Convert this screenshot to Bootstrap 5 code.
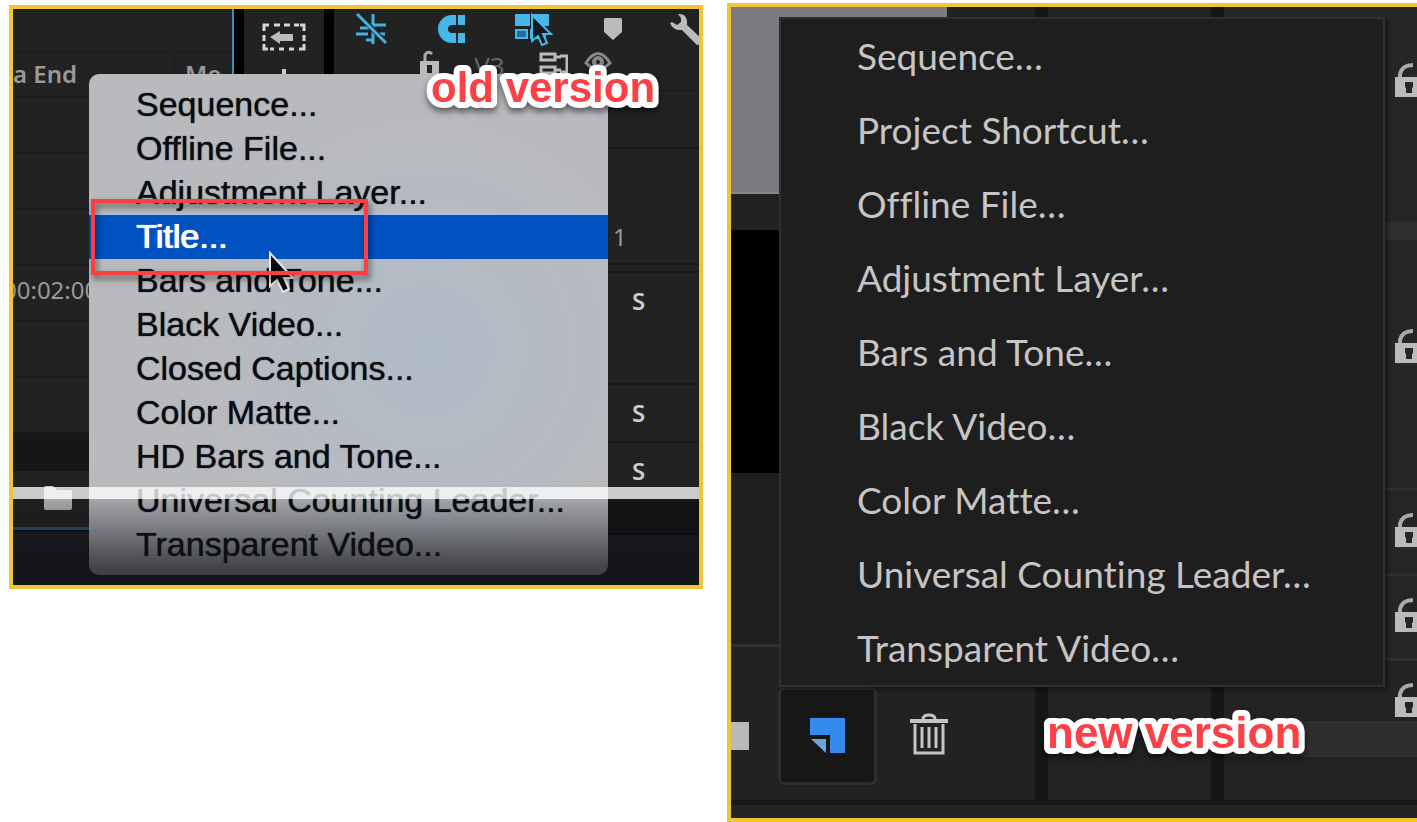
<!DOCTYPE html>
<html lang="en">
<head>
<meta charset="utf-8">
<meta name="viewport" content="width=device-width, initial-scale=1">
<title>New Item menu: old and new version</title>
<link href="https://cdn.jsdelivr.net/npm/bootstrap@5.3.0/dist/css/bootstrap.min.css" rel="stylesheet">
<style>
  body { background: #fff; font-family: "Liberation Sans", Arial, sans-serif; }
  .compare { display: grid; grid-template-columns: 694fr 690fr; column-gap: 24px; padding-left: 9px; }
  .shot { border: 4px solid #f2c437; background: #222; }
  .shot-old { margin-top: 5px; }
  .shot-new { margin-top: 3px; border-right: 0; }
  svg { display: block; flex: none; }

  /* old version: application behind the menu */
  .old-project { width: 221px; flex: none; border-right: 2px solid #3f8fbd; color: #999; font: 24px/40px "Noto Sans", sans-serif; overflow: hidden; }
  .old-project .line-row { height: 56px; border-bottom: 1px solid #1b1b1b; }
  .old-project .top-row { height: 44px; }
  .old-project .head-row { height: 44px; font-weight: 600; padding-top: 1px; }
  .old-project .me-col { border-left: 1px solid #181818; margin-right: 8px; padding-left: 10px; width: 50px; overflow: hidden; }
  .old-project .code-row { padding-top: 5px; text-indent: -10px; }
  .old-project .dim-row { height: 38px; background: #161616; }
  .old-project .foot-row { height: 53px; padding-left: 31px; }
  .gutter { width: 10px; flex: none; background: #000; }
  .old-tools { width: 80px; flex: none; padding-top: 14px; }
  .old-time { color: #ccc; }
  .tool-row { height: 39px; padding-left: 22px; }
  .track-row { height: 43px; padding: 2px 0 0 86px; border-bottom: 1px solid #181818; color: #666; font: 26px/32px "Noto Sans", sans-serif; }
  .track-row .track-name { width: 99px; text-align: center; }
  .time-row { border-bottom: 2px solid #191919; padding-left: 298px; font: 600 24px/28px "Noto Sans", sans-serif; }
  .time-row.h58 { height: 58px; padding-top: 14px; }
  .time-row.h116 { height: 116px; padding: 0 0 12px 279px; font-weight: 400; color: #999; }
  .time-row.h8 { height: 8px; }
  .time-row.h112 { height: 112px; padding-top: 14px; }
  .old-end { height: 34px; background: #131313; border-bottom: 2px solid #090909; }
  .old-base { height: 55px; background: #1c1d20; border-top: 2px solid #0a0c0e; }
  .blue-line { height: 3px; width: 221px; background: #285f84; }
  .old-body { height: 518px; }

  .old-menu { left: 76px; top: 65px; width: 519px; padding: 9px 0 8px; border-radius: 10px; background: radial-gradient(circle at 65% 55%, #b0bcc8 0, #b5bbc3 25%, #b9babd 55%); overflow: hidden; }
  .old-menu .pick { display: block; width: 100%; height: 44px; padding: 0 0 2px 47px; border: 0; background: none; color: #0b0c12; font-size: 34px; line-height: 42px; text-align: left; text-shadow: 0 0 1px #0b0c12; white-space: nowrap; }
  .old-menu .pick.on { background: #0052c1; color: #fff; text-shadow: 0 0 1px #fff, 1px 0 0 #fff; box-shadow: 0 -1px 0 #a3c3ee, 0 1px 0 #a3c3ee; }
  .seek-bar { left: 0; right: 0; top: 478px; height: 12px; background: rgba(255,255,255,.77); }
  .fade-out { left: 0; right: 0; bottom: 0; height: 86px; background: linear-gradient(rgba(15,17,22,.12), rgba(15,17,22,.7) 80%, rgba(15,17,22,.74)); }
  .pointer { left: 255px; top: 242px; }
  .mark-box { left: 78px; top: 190px; width: 277px; height: 76px; border: 4px solid #f94144; filter: drop-shadow(2px 4px 3px rgba(0,0,0,.55)); }
  .tag-text { overflow: visible; filter: drop-shadow(0 4px 3px rgba(0,0,0,.5)); }
  .tag-text text { fill: #fb4145; font-weight: 700; stroke: #fff; stroke-width: 12px; stroke-linejoin: round; paint-order: stroke; }
  .tag-old { right: 40px; top: 54px; font-size: 42px; }
  .tag-new { right: 114px; bottom: 61px; font-size: 44px; }

  /* new version */
  .new-left { width: 304px; flex: none; }
  .new-left .preview { height: 187px; width: 216px; background: #7d7b7f; border-bottom: 2px solid #88868a; }
  .new-left .gap-row { height: 36px; }
  .new-left .black-row { height: 243px; background: #000; }
  .new-left .list-row { height: 174px; background: #1f1f1f; border-bottom: 3px solid #2e2e2e; }
  .new-left .action-row { height: 153px; padding-top: 24px; }
  .side-chip { width: 18px; height: 28px; background: #b9b9b9; }
  .new-btn { width: 99px; height: 98px; margin-left: 29px; background: #171717; border: 3px solid #2e2e2e; border-radius: 6px; }
  .bin-btn { margin-left: 33px; background: none; border: 0; }
  .split { width: 13px; flex: none; background: #161616; }
  .new-mid { width: 163px; flex: none; background: #232323; }
  .new-tracks { background: #262527; }
  .new-tracks .lane { border-bottom: 3px solid #2f2f30; padding-left: 171px; overflow: hidden; }
  .lane-a { height: 218px; padding-top: 56px; }
  .lane-sep { height: 15px; background: #303030; }
  .lane-b { height: 251px; padding-top: 89px; }
  .lane-c { height: 85px; padding-top: 22px; }
  .lane-d { height: 60px; padding-top: 22px; background: #232323; }
  .lane-bar { height: 36px; background: #2e2e2e; }
  .lane-e { height: 43px; background: #232323; }
  .new-base { height: 18px; border-top: 5px solid #191919; background: #242424; }
  .new-menu { left: 48px; top: 10px; width: 606px; background: #1e1e1e; border: 2px solid #303030; box-shadow: 3px 3px 4px rgba(0,0,0,.4); }
  .new-menu .pick { display: block; width: 100%; height: 74px; padding: 0 0 0 76px; border: 0; background: none; color: #c6c4c4; font: 37px/70px Lato, sans-serif; font-variant-ligatures: none; text-align: left; white-space: nowrap; }
</style>
</head>
<body>
<svg class="d-none" aria-hidden="true">
  <symbol id="padlock" viewBox="0 0 28 35">
    <path d="M5 16V11Q7 2 18 2" fill="none" stroke="#aaa" stroke-width="4"/>
    <path fill="#bbb" fill-rule="evenodd" d="M0 14H28V34H0ZM10 19V24L11 25V30H17V25L18 24V19Z"/>
  </symbol>
</svg>
<main class="compare align-items-start">

  <section class="shot shot-old position-relative overflow-hidden" aria-label="Old version">
    <div class="old-body d-flex">
      <div class="old-project">
        <div class="line-row top-row"></div>
        <div class="line-row head-row d-flex justify-content-between"><span>a End</span><span class="me-col">Me</span></div>
        <div class="line-row"></div>
        <div class="line-row"></div>
        <div class="line-row"></div>
        <div class="line-row code-row">00:02:00</div>
        <div class="line-row"></div>
        <div class="line-row"></div>
        <div class="dim-row"></div>
        <div class="foot-row d-flex align-items-center">
          <svg width="28" height="24" viewBox="0 0 28 24"><path d="M0 2Q0 0 2 0H9L13 4H26Q28 4 28 6V22Q28 24 26 24H2Q0 24 0 22Z" fill="#bbb"/></svg>
        </div>
      </div>
      <div class="gutter"></div>
      <div class="old-tools d-flex flex-column align-items-center">
        <svg width="44" height="60" viewBox="0 0 44 60" fill="none">
          <g stroke="#d5d5d5" stroke-width="3"><path d="M2 8V2H7M12 2H18M22 2H28M32 2H37M38 2H42V8M42 12V18M42 21V26H37M32 26H27M22 26H17M12 26H8M6 26H2V21M2 18V12"/></g>
          <path d="M8 14L18 8V11H31V18H18V21Z" fill="#bbb"/><path d="M22 46V60" stroke="#ccc" stroke-width="4"/>
        </svg>
      </div>
      <div class="gutter"></div>
      <div class="old-time flex-grow-1">
        <div class="tool-row d-flex align-items-center justify-content-between">
          <svg width="32" height="32" viewBox="0 0 32 32" stroke="#40b2e3" fill="none"><path stroke-width="3" d="M17 1V31M0 21H12M20 21H29M10 12H30M4 15H13M10 27H16"/><path stroke="#222" stroke-width="5" d="M2 1L30 30"/><path stroke-width="3" d="M1 1L30 30"/></svg>
          <svg width="30" height="30" viewBox="0 0 30 30"><path d="M28 6H15A9 9 0 0 0 15 24H28" fill="none" stroke="#46b8e8" stroke-width="10"/><path d="M20 1V11M20 19V29" stroke="#222" stroke-width="2"/></svg>
          <svg width="40" height="34" viewBox="0 0 40 34"><path fill="#46b8e8" d="M0 2H15V14H0ZM18 2H34V14H18Z"/><path fill="#246e94" stroke="#46b8e8" stroke-width="2" d="M1 18H12V26H1ZM16 18H30V26H16Z"/><path d="M17 3V29L23 24L27 33L32 31L28 22H36Z" fill="#101a20" stroke="#46b8e8" stroke-width="2"/></svg>
          <svg width="18" height="22" viewBox="0 0 18 22"><path d="M1 0H17Q18 0 18 2V14L9 22L0 14V2Q0 0 1 0Z" fill="#bbb"/></svg>
          <svg width="29" height="32" viewBox="0 0 29 32"><path d="M8 1Q16 0 17 8L17 12L31 25L28 33L12 17Q3 18 0 10L2 9L7 12L11 9V5Z" fill="#bbb"/></svg>
        </div>
        <div class="track-row d-flex">
          <svg width="20" height="26" viewBox="0 0 20 26"><path d="M5 13V5Q8 0 12 4" fill="none" stroke="#aaa" stroke-width="3"/><path fill="#bbb" fill-rule="evenodd" d="M0 11H19V26H0ZM7 15V23H12V15Z"/></svg>
          <span class="track-name">V3</span>
          <svg width="29" height="26" viewBox="0 0 29 26" fill="none" stroke="#bbb" stroke-width="3"><path d="M2 4H16V10H2ZM2 17H16V23H2ZM16 7H22M16 20H22M21 6H28V22H21"/></svg>
          <svg class="ms-3" width="28" height="24" viewBox="0 0 28 24"><path d="M2 13Q14 -6 26 13Q14 25 2 13Z" fill="none" stroke="#888" stroke-width="3"/><circle cx="14" cy="12" r="6" fill="#888"/><circle cx="14" cy="12" r="2" fill="#222"/></svg>
        </div>
        <div class="time-row h58"></div>
        <div class="time-row h116 d-flex align-items-end">1</div>
        <div class="time-row h8"></div>
        <div class="time-row h112">S</div>
        <div class="time-row h58">S</div>
        <div class="time-row h58">S</div>
        <div class="old-end"></div>
      </div>
    </div>
    <div class="blue-line"></div>
    <div class="old-base"></div>

    <div class="old-menu position-absolute" role="menu">
      <button class="pick" type="button">Sequence...</button>
      <button class="pick" type="button">Offline File...</button>
      <button class="pick" type="button">Adjustment Layer...</button>
      <button class="pick on position-relative" type="button">Title...</button>
      <button class="pick" type="button">Bars and Tone...</button>
      <button class="pick" type="button">Black Video...</button>
      <button class="pick" type="button">Closed Captions...</button>
      <button class="pick" type="button">Color Matte...</button>
      <button class="pick" type="button">HD Bars and Tone...</button>
      <button class="pick" type="button">Universal Counting Leader...</button>
      <button class="pick" type="button">Transparent Video...</button>
    </div>
    <div class="fade-out position-absolute"></div>
    <div class="seek-bar position-absolute"></div>
    <svg class="pointer position-absolute" width="26" height="44" viewBox="0 0 26 44"><path d="M2 2V35L9 29L15 41L21 38L16 27H25Z" fill="#0a0a0a" stroke="#e8e8e8" stroke-width="2"/></svg>
    <div class="mark-box position-absolute"></div>
    <svg class="tag-text tag-old position-absolute" width="228" height="48"><text x="0" y="39">old version</text></svg>
  </section>

  <section class="shot shot-new position-relative overflow-hidden" aria-label="New version">
    <div class="d-flex">
      <div class="new-left">
        <div class="preview"></div>
        <div class="gap-row"></div>
        <div class="black-row"></div>
        <div class="list-row"></div>
        <div class="action-row d-flex align-items-center">
          <div class="side-chip"></div>
          <button class="new-btn d-flex align-items-center justify-content-center p-0" type="button" aria-label="New item">
            <svg width="35" height="36" viewBox="0 0 35 36"><path fill="#338bee" d="M0 0H35V35H20V17H0Z"/><path fill="#68a6e4" d="M1 21H16V35Z"/></svg>
          </button>
          <button class="bin-btn px-0 pb-1" type="button" aria-label="Delete">
            <svg width="38" height="42" viewBox="0 0 38 42" fill="none" stroke="#c4c4c4"><path stroke-width="3" d="M13 6Q13 2 19 2T25 6M5 11V40H33V11"/><path stroke-width="4" d="M0 8H38"/><path stroke-width="3" d="M12 14V35M19 14V35M26 14V35"/></svg>
          </button>
        </div>
      </div>
      <div class="split"></div>
      <div class="new-mid"></div>
      <div class="split"></div>
      <div class="new-tracks flex-grow-1">
        <div class="lane lane-a"><svg width="28" height="35"><use href="#padlock"/></svg></div>
        <div class="lane-sep"></div>
        <div class="lane lane-b"><svg width="28" height="35"><use href="#padlock"/></svg></div>
        <div class="lane lane-c"><svg width="28" height="35"><use href="#padlock"/></svg></div>
        <div class="lane lane-c"><svg width="28" height="35"><use href="#padlock"/></svg></div>
        <div class="lane lane-d border-0"><svg width="28" height="35"><use href="#padlock"/></svg></div>
        <div class="lane-bar"></div>
        <div class="lane-e"></div>
      </div>
    </div>
    <div class="new-base"></div>

    <div class="new-menu position-absolute" role="menu">
      <button class="pick" type="button">Sequence…</button>
      <button class="pick" type="button">Project Shortcut…</button>
      <button class="pick" type="button">Offline File…</button>
      <button class="pick" type="button">Adjustment Layer…</button>
      <button class="pick" type="button">Bars and Tone…</button>
      <button class="pick" type="button">Black Video…</button>
      <button class="pick" type="button">Color Matte…</button>
      <button class="pick" type="button">Universal Counting Leader…</button>
      <button class="pick" type="button">Transparent Video…</button>
    </div>
    <svg class="tag-text tag-new position-absolute" width="256" height="48"><text x="0" y="39">new version</text></svg>
  </section>
</main>
<script src="https://cdn.jsdelivr.net/npm/bootstrap@5.3.0/dist/js/bootstrap.bundle.min.js"></script>
</body>
</html>
